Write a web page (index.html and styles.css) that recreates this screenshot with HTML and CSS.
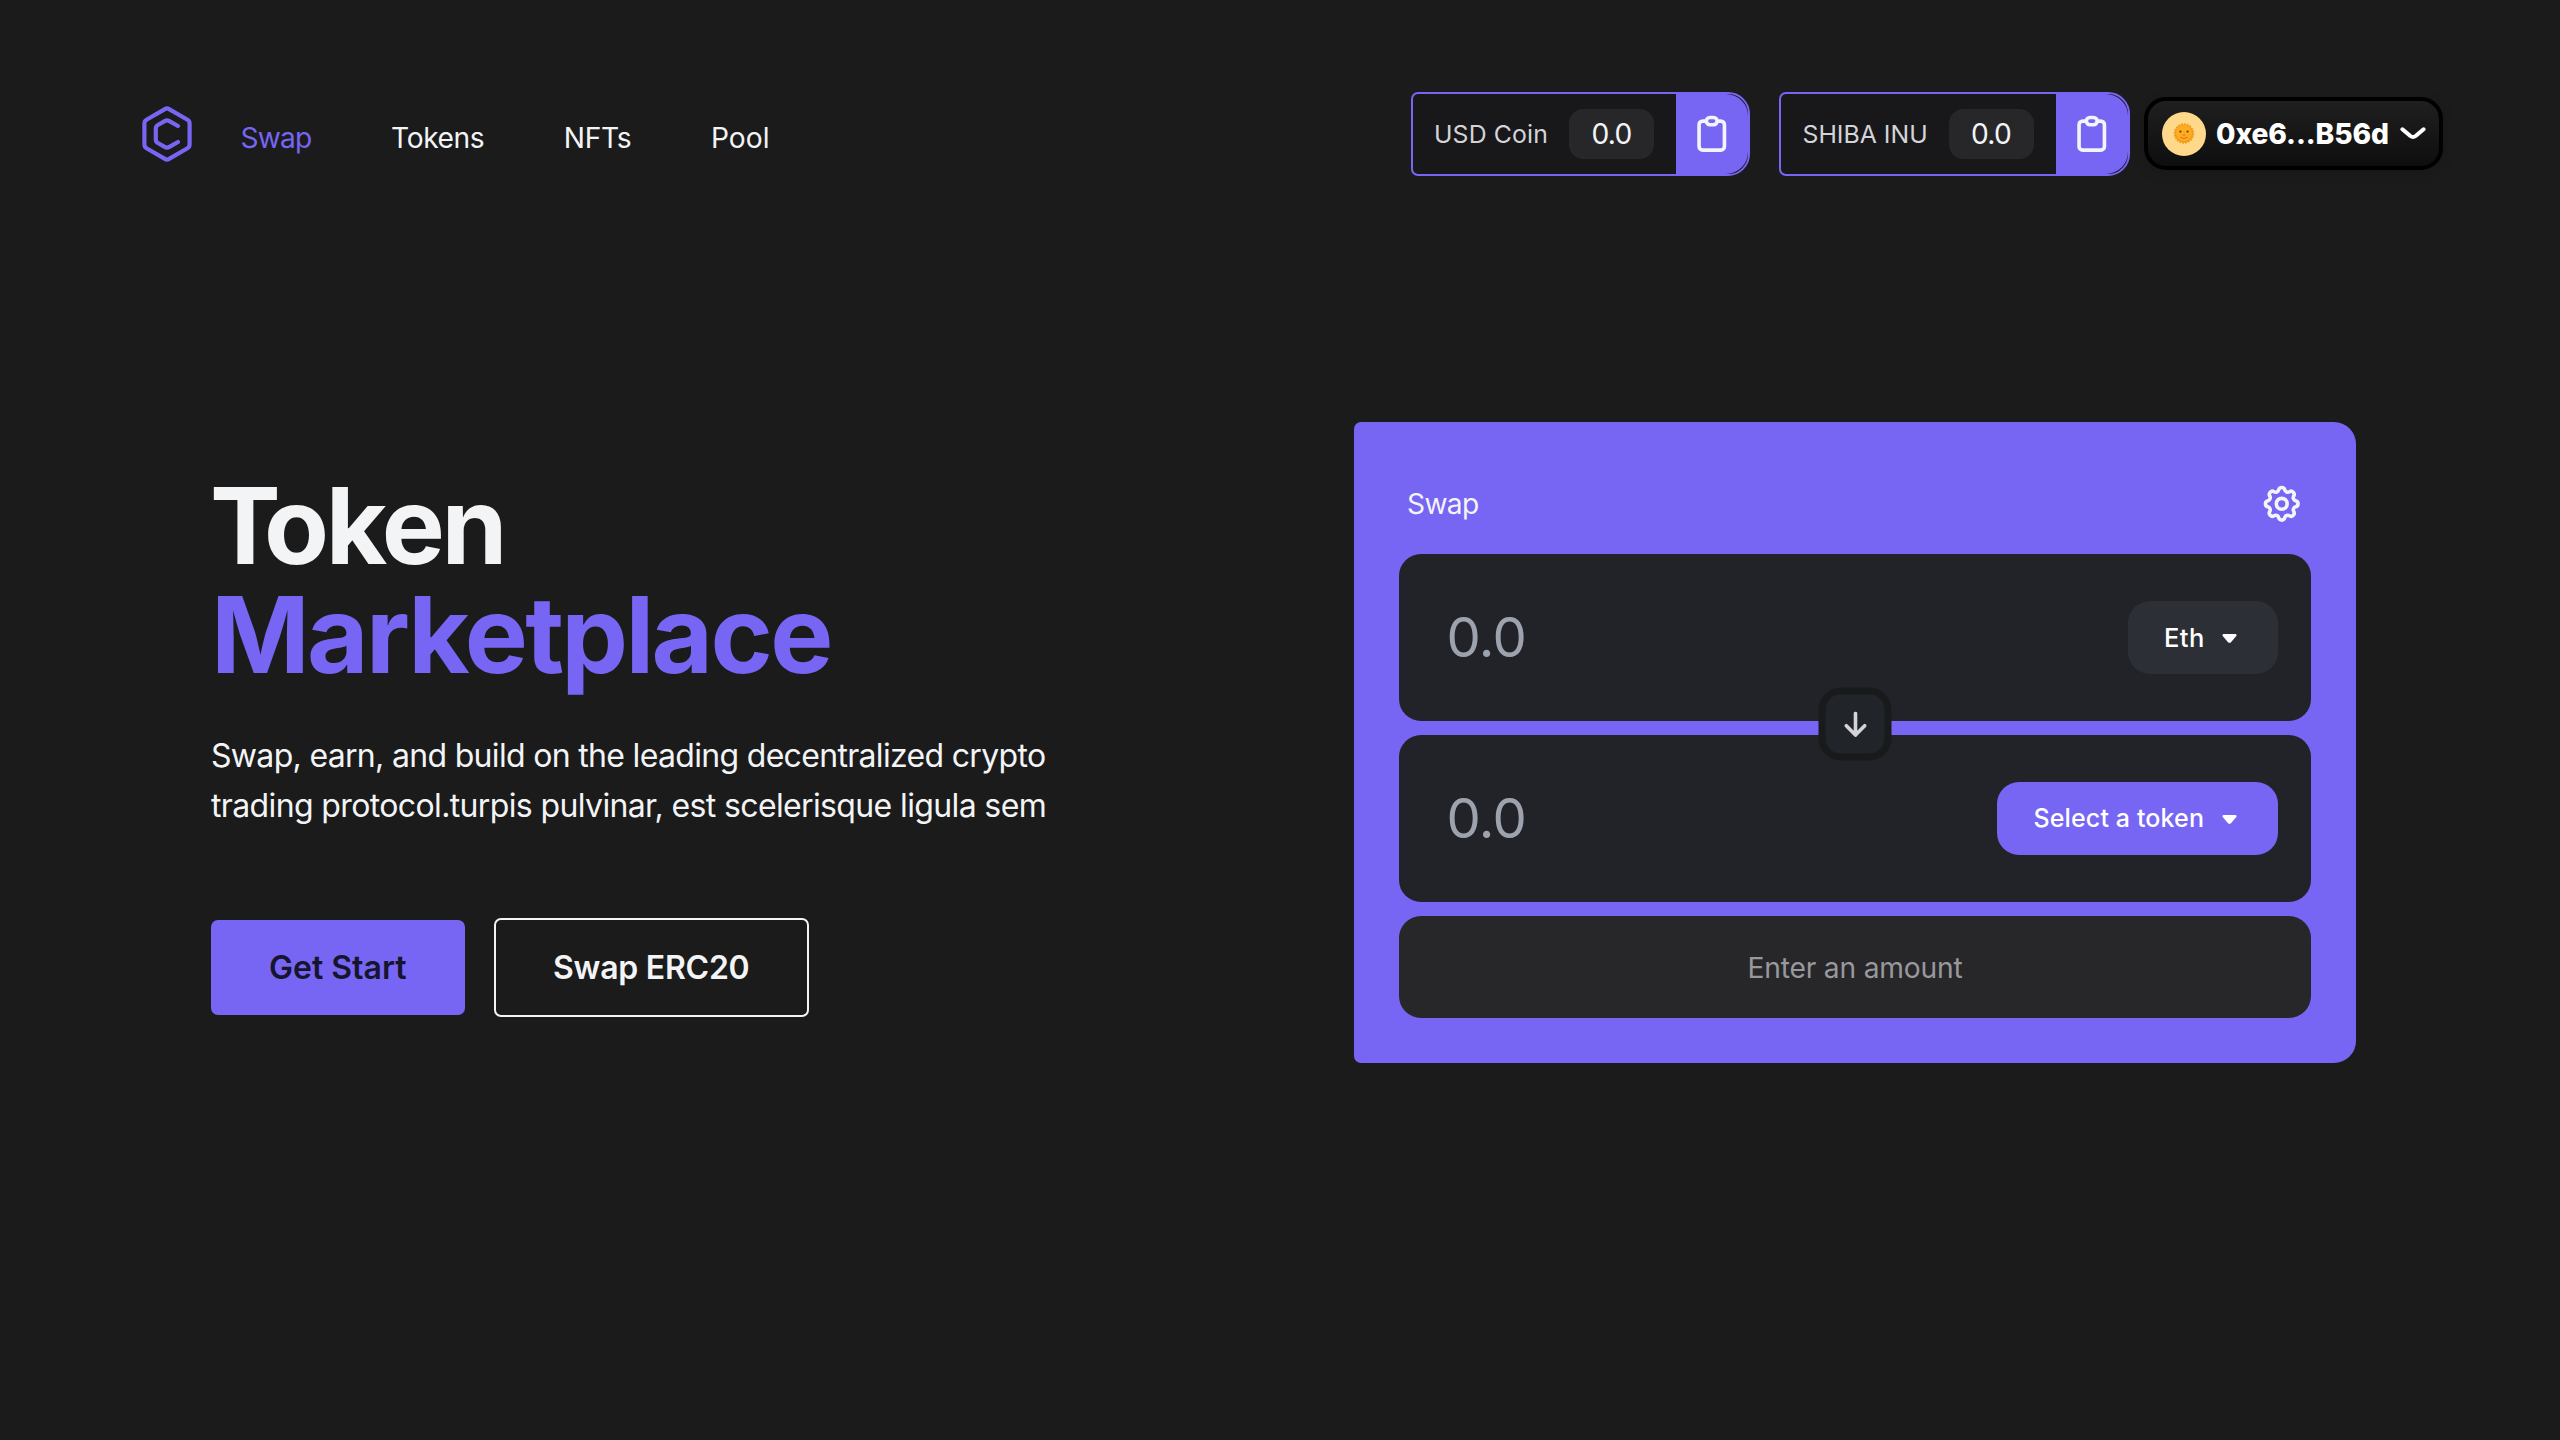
FILE: index.html
```html
<!DOCTYPE html>
<html lang="en">
<head>
<meta charset="utf-8">
<title>Token Marketplace</title>
<link rel="stylesheet" href="styles.css">
</head>
<body>
<header class="header">
  <div class="brand">
    <svg class="logo" viewBox="0 0 50 56" fill="none" stroke="currentColor" stroke-width="4.2" stroke-linejoin="round" stroke-linecap="round">
      <path d="M22.9 3.1a4.2 4.2 0 0 1 4.2 0l18.4 10.7a4.2 4.2 0 0 1 2.1 3.6v21.2a4.2 4.2 0 0 1-2.1 3.6L27.1 52.9a4.2 4.2 0 0 1-4.2 0L4.5 42.2a4.2 4.2 0 0 1-2.1-3.6V17.4a4.2 4.2 0 0 1 2.1-3.6Z"/>
      <path d="M36 20l-8.6-4.9a4.8 4.8 0 0 0-4.8 0l-6.7 3.9a4.2 4.2 0 0 0-2.1 3.6v10.8a4.2 4.2 0 0 0 2.1 3.6l6.7 3.9a4.8 4.8 0 0 0 4.8 0L36 36"/>
    </svg>
    <nav class="nav">
      <a class="nav-swap">Swap</a>
      <a class="nav-tokens">Tokens</a>
      <a class="nav-nfts">NFTs</a>
      <a class="nav-pool">Pool</a>
    </nav>
  </div>
  <div class="account">
    <div class="pill">
      <span class="pill-name usdc">USD Coin</span>
      <span class="pill-value">0.0</span>
      <button class="pill-copy">
        <svg class="icon" viewBox="0 0 24 24"><path d="M9 5H7a2 2 0 00-2 2v12a2 2 0 002 2h10a2 2 0 002-2V7a2 2 0 00-2-2h-2M9 5a2 2 0 002 2h2a2 2 0 002-2M9 5a2 2 0 012-2h2a2 2 0 012 2"/></svg>
      </button>
    </div>
    <div class="pill">
      <span class="pill-name shib">SHIBA INU</span>
      <span class="pill-value">0.0</span>
      <button class="pill-copy">
        <svg class="icon" viewBox="0 0 24 24"><path d="M9 5H7a2 2 0 00-2 2v12a2 2 0 002 2h10a2 2 0 002-2V7a2 2 0 00-2-2h-2M9 5a2 2 0 002 2h2a2 2 0 002-2M9 5a2 2 0 012-2h2a2 2 0 012 2"/></svg>
      </button>
    </div>
    <button class="wallet">
      <svg class="avatar" viewBox="0 0 44 44">
        <circle cx="22" cy="22" r="22" fill="#ffd98a"/>
        <circle cx="22" cy="21.5" r="9.3" fill="#f59a1c" stroke="#f59a1c" stroke-width="2" stroke-dasharray="1.8 1.1"/>
        <circle cx="22" cy="21" r="8" fill="#fcae20"/>
        <ellipse cx="18.4" cy="19.6" rx="1.2" ry="1.1" fill="#7a4310"/>
        <ellipse cx="25.6" cy="19.6" rx="1.2" ry="1.1" fill="#7a4310"/>
        <path d="M21.2 23h1.6M18.8 25.4q3.2 1.9 6.4 0" fill="none" stroke="#d9701a" stroke-width="1.1" stroke-linecap="round"/>
      </svg>
      <span class="address">0xe6...B56d</span>
      <svg class="chevron" viewBox="0 0 26 13"><path d="M2.4 2.3l8 6.7q2.6 2 5.2 0l8-6.7"/></svg>
    </button>
  </div>
</header>

<main class="main">
  <section class="hero">
    <h1 class="title"><span class="title-first"><span class="title-cap">T</span>oken</span><span class="title-second">Marketplace</span></h1>
    <p class="lead"><span class="lead-first">Swap, earn, and build on the leading decentralized crypto</span><br>trading protocol.turpis pulvinar, est scelerisque ligula sem</p>
    <div class="actions">
      <button class="btn btn-primary">Get Start</button>
      <button class="btn btn-outline">Swap ERC20</button>
    </div>
  </section>

  <section class="card">
    <div class="card-head">
      <span class="card-title">Swap</span>
      <svg class="icon" viewBox="0 0 24 24"><path d="M10.325 4.317c.426-1.756 2.924-1.756 3.35 0a1.724 1.724 0 002.573 1.066c1.543-.94 3.31.826 2.37 2.37a1.724 1.724 0 001.065 2.572c1.756.426 1.756 2.924 0 3.35a1.724 1.724 0 00-1.066 2.573c.94 1.543-.826 3.31-2.37 2.37a1.724 1.724 0 00-2.572 1.065c-.426 1.756-2.924 1.756-3.35 0a1.724 1.724 0 00-2.573-1.066c-1.543.94-3.31-.826-2.37-2.37a1.724 1.724 0 00-1.065-2.572c-1.756-.426-1.756-2.924 0-3.35a1.724 1.724 0 001.066-2.573c-.94-1.543.826-3.31 2.37-2.37.996.608 2.296.07 2.572-1.065z"/><path d="M15 12a3 3 0 11-6 0 3 3 0 016 0z"/></svg>
    </div>
    <div class="fields">
      <div class="field">
        <span class="amount">0.0</span>
        <button class="token"><span class="token-eth">Eth</span><svg class="caret" viewBox="0 0 16 10"><path d="M1.5 0h13q1.6.6.7 2L9.6 8.6q-1.6 1.5-3.2 0L.8 2Q-.1.6 1.5 0Z"/></svg></button>
      </div>
      <div class="field">
        <span class="amount">0.0</span>
        <button class="token token-select"><span>Select a token</span><svg class="caret" viewBox="0 0 16 10"><path d="M1.5 0h13q1.6.6.7 2L9.6 8.6q-1.6 1.5-3.2 0L.8 2Q-.1.6 1.5 0Z"/></svg></button>
      </div>
      <button class="flip">
        <svg class="arrow" viewBox="0 0 24 26"><path d="M12 1.8v21.8M2.8 14.2l9.2 9.4 9.2-9.4"/></svg>
      </button>
    </div>
    <button class="submit">Enter an amount</button>
  </section>
</main>
</body>
</html>
```
FILE: styles.css
```css
* { box-sizing: border-box; }

body {
  margin: 0;
  min-height: 1440px;
  background: #1b1b1b;
  color: #f3f4f6;
  font-family: Inter, "Liberation Sans", sans-serif;
  font-size: 28.2px;
}

button {
  margin: 0;
  padding: 0;
  border: 0;
  background: none;
  color: inherit;
  font: inherit;
}

svg { display: block; flex: none; }

.icon {
  width: 43.5px;
  height: 43.5px;
  fill: none;
  stroke: #f3f4f6;
  stroke-width: 2;
  stroke-linecap: round;
  stroke-linejoin: round;
}

/* Header */
.header {
  display: flex;
  justify-content: space-between;
  align-items: center;
  height: 84px;
  margin: 92px 117px 0 142.4px;
}

.brand { display: flex; align-items: center; gap: 48px; }
.logo { width: 50px; height: 56px; margin-top: -1px; color: #7765f3; }

.nav { display: flex; gap: 79.6px; padding-top: 8px; line-height: 44px; }
.nav-swap { color: #7765f3; letter-spacing: -0.79px; }
.nav-tokens { letter-spacing: -0.42px; }
.nav-nfts { letter-spacing: -0.33px; }
.nav-pool { letter-spacing: 0; }

.account { display: flex; align-items: center; }

.pill {
  display: flex;
  align-items: center;
  height: 84px;
  margin-right: 29px;
  padding-left: 21.5px;
  border: 2px solid #7765f3;
  border-radius: 7px 22px 22px 7px;
  background: #18181b;
}
.pill + .pill { margin-right: 14.5px; }
.pill-name { color: #d4d4d8; font-size: 24.8px; }
.usdc { width: 115px; letter-spacing: 0.15px; }
.shib { width: 126px; letter-spacing: 0; }
.pill-value {
  width: 85px;
  height: 50px;
  margin: 0 22px 0 20px;
  border-radius: 14.5px;
  background: #27272a;
  line-height: 51px;
  text-align: center;
  letter-spacing: -0.74px;
}
.pill-copy {
  display: flex;
  align-items: center;
  justify-content: center;
  width: 72px;
  height: 80px;
  border-radius: 0 22px 22px 0;
  background: #7765f3;
}

.wallet {
  display: flex;
  align-items: center;
  width: 299px;
  height: 73px;
  margin-top: -1px;
  padding-left: 14px;
  border: 4px solid #000;
  border-radius: 22px;
  background: linear-gradient(#1f1f1f, #0e0e0e);
  box-shadow: 0 4px 14px rgba(0, 0, 0, 0.12);
}
.avatar { width: 44px; height: 44px; }
.address {
  width: 183px;
  padding: 1px 0 0 10px;
  color: #fff;
  font-weight: 800;
  letter-spacing: -0.11px;
  text-align: left;
}
.chevron {
  width: 26px;
  height: 13px;
  margin-left: 11px;
  fill: none;
  stroke: #fff;
  stroke-width: 4;
  stroke-linecap: round;
  stroke-linejoin: round;
}

/* Main */
.main {
  display: flex;
  justify-content: space-between;
  align-items: flex-start;
  margin: 246px 204px 0 211px;
}

.hero { padding-top: 50px; }
.title {
  display: flex;
  flex-direction: column;
  margin: 0 0 41px;
  font-size: 106px;
  font-weight: 700;
  line-height: 108.8px;
}
.title-first { margin-left: -1px; letter-spacing: -3.2px; }
.title-cap { letter-spacing: -16.8px; }
.title-second { color: #7765f3; letter-spacing: -2.64px; }
.lead {
  margin: 0 0 86px;
  font-size: 32px;
  line-height: 50.8px;
  letter-spacing: -0.63px;
  white-space: nowrap;
}
.lead-first { letter-spacing: -0.68px; }

.actions { display: flex; align-items: center; gap: 29px; }
.btn { border-radius: 7px; font-size: 32px; font-weight: 600; }
.btn-primary { width: 253.5px; height: 95px; background: #7765f3; color: #16152e; }
.btn-outline { width: 315.5px; height: 98.5px; border: 2px solid #f3f4f6; letter-spacing: -0.25px; }

/* Swap card */
.card {
  width: 1002px;
  height: 641px;
  padding: 60px 45px 45px;
  border-radius: 7px 22px 22px 7px;
  background: #7765f3;
}
.card-head {
  display: flex;
  align-items: center;
  justify-content: space-between;
  height: 43.5px;
  margin-bottom: 28.5px;
  padding: 0 7.5px 0 8px;
}
.card-title { padding-top: 1px; letter-spacing: -0.7px; }

.fields { position: relative; display: flex; flex-direction: column; gap: 14.5px; }
.field {
  display: flex;
  align-items: center;
  justify-content: space-between;
  height: 166.5px;
  padding: 0 33px 0 47.5px;
  border-radius: 22px;
  background: #222328;
}
.amount { color: #9ca3af; font-size: 54.4px; letter-spacing: -0.6px; }

.token {
  display: flex;
  align-items: center;
  justify-content: space-between;
  width: 150.5px;
  height: 73px;
  padding: 0 41px 0 36.5px;
  border-radius: 22px;
  background: #2c2f36;
  color: #fff;
  font-size: 25px;
  font-weight: 500;
}
.token-eth { font-size: 25.5px; letter-spacing: 0.4px; }
.token-select { width: 281px; background: #7765f3; letter-spacing: 0.13px; }
.caret { width: 15px; height: 9.5px; margin-top: 3px; fill: #fff; }

/* Direction button sits over the seam between both fields */
.flip {
  position: absolute;
  top: 50%;
  left: 50%;
  display: flex;
  align-items: center;
  justify-content: center;
  width: 73px;
  height: 73px;
  transform: translate(-50%, -50%);
  margin-top: -3.5px;
  border: 7.25px solid #191a1c;
  border-radius: 22px;
  background: #212429;
}
.arrow {
  width: 24px;
  height: 26px;
  fill: none;
  stroke: #d4d4d8;
  stroke-width: 3.6;
  stroke-linecap: round;
  stroke-linejoin: round;
}

.submit {
  width: 100%;
  height: 101.5px;
  margin-top: 14.5px;
  padding-top: 2px;
  border-radius: 22px;
  background: #27272a;
  color: #98989d;
  letter-spacing: -0.19px;
}
```
